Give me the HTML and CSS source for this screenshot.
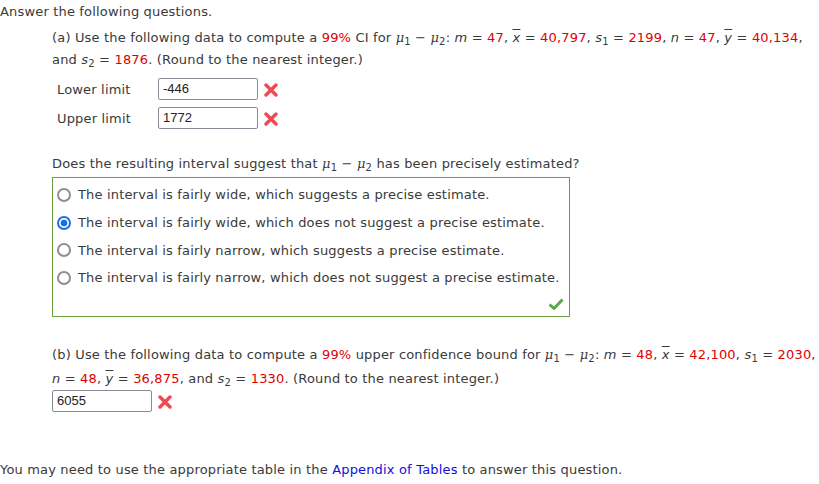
FILE: index.html
```html
<!DOCTYPE html>
<html>
<head>
<meta charset="utf-8">
<link rel="stylesheet" href="styles.css">
</head>
<body>
<p class="intro">Answer the following questions.</p>
<div class="part">
  <p class="q">(a) Use the following data to compute a <span class="r">99%</span> CI for <i class="mu">μ</i><sub>1</sub> − <i class="mu">μ</i><sub>2</sub>: <i>m</i> = <span class="r">47</span>, <i class="bar">x</i> = <span class="r">40,797</span>, <i>s</i><sub>1</sub> = <span class="r">2199</span>, <i>n</i> = <span class="r">47</span>, <i class="bar">y</i> = <span class="r">40,134</span>,<br>and <i>s</i><sub>2</sub> = <span class="r">1876</span>. (Round to the nearest integer.)</p>
  <div class="rows">
    <div class="row"><span class="lbl">Lower limit</span><span class="inp">-446</span><svg class="x" viewBox="0 0 14 14"><path d="M2 2 L12 12 M12 2 L2 12" stroke="#f0494f" stroke-width="3.4" stroke-linecap="round"/></svg></div>
    <div class="row"><span class="lbl">Upper limit</span><span class="inp">1772</span><svg class="x" viewBox="0 0 14 14"><path d="M2 2 L12 12 M12 2 L2 12" stroke="#f0494f" stroke-width="3.4" stroke-linecap="round"/></svg></div>
  </div>
  <p class="q2">Does the resulting interval suggest that <i class="mu">μ</i><sub>1</sub> − <i class="mu">μ</i><sub>2</sub> has been precisely estimated?</p>
  <div class="box">
    <div class="opt"><span class="radio"></span>The interval is fairly wide, which suggests a precise estimate.</div>
    <div class="opt"><span class="radio on"></span>The interval is fairly wide, which does not suggest a precise estimate.</div>
    <div class="opt"><span class="radio"></span>The interval is fairly narrow, which suggests a precise estimate.</div>
    <div class="opt"><span class="radio"></span>The interval is fairly narrow, which does not suggest a precise estimate.</div>
    <svg class="check" viewBox="0 0 16 12"><path d="M1.5 6.5 L6 10.5 L14.5 1.5" fill="none" stroke="#5aa84a" stroke-width="3" stroke-linejoin="round"/></svg>
  </div>
  <p class="q q3">(b) Use the following data to compute a <span class="r">99%</span> upper confidence bound for <i class="mu">μ</i><sub>1</sub> − <i class="mu">μ</i><sub>2</sub>: <i>m</i> = <span class="r">48</span>, <i class="bar">x</i> = <span class="r">42,100</span>, <i>s</i><sub>1</sub> = <span class="r">2030</span>,<br><i>n</i> = <span class="r">48</span>, <i class="bar">y</i> = <span class="r">36,875</span>, and <i>s</i><sub>2</sub> = <span class="r">1330</span>. (Round to the nearest integer.)</p>
  <div class="row rowb"><span class="inp">6055</span><svg class="x" viewBox="0 0 14 14"><path d="M2 2 L12 12 M12 2 L2 12" stroke="#f0494f" stroke-width="3.4" stroke-linecap="round"/></svg></div>
</div>
<p class="foot">You may need to use the appropriate table in the <a href="#">Appendix of Tables</a> to answer this question.</p>
</body>
</html>
```
FILE: styles.css
```css
body {
  margin: 0;
  font-family: "DejaVu Sans", Verdana, sans-serif;
  font-size: 13px;
  letter-spacing: 0.17px;
  color: #3a3a3a;
  background: #fff;
}
p { margin: 0; }
.intro { padding: 3px 0 0 0; line-height: 18px; }
.part { padding-left: 52px; }
.q { margin-top: 6px; line-height: 22px; white-space: nowrap; }
.r { color: #e00000; }
i { font-style: italic; }
i.mu { font-family: "DejaVu Serif", serif; }
sub { font-size: 10px; vertical-align: -3px; line-height: 0; }
.bar { text-decoration: overline; }
.rows { margin-top: 7px; padding-left: 5px; display: flex; flex-direction: column; gap: 7px; }
.row { display: flex; align-items: center; height: 22px; }
.lbl { width: 101px; }
.inp {
  box-sizing: border-box;
  width: 100px; height: 22px;
  border: 1px solid #8a8a95;
  border-radius: 2px;
  font-family: "Liberation Sans", Arial, sans-serif;
  font-size: 13px;
  letter-spacing: 0;
  color: #222;
  padding: 2px 4px;
  line-height: 16px;
}
.x { width: 14px; height: 14px; margin-left: 6px; margin-top: 2px; }
.q2 { margin-top: 26px; line-height: 18px; }
.box {
  position: relative;
  margin-top: 4px;
  width: 518px;
  height: 140px;
  box-sizing: border-box;
  border: 1px solid #6b9e3d;
  padding-top: 3px;
}
.opt { display: flex; align-items: center; height: 27.7px; padding-left: 4px; white-space: nowrap; }
.radio {
  box-sizing: border-box;
  width: 14px; height: 14px;
  border: 2px solid #8e8e96;
  border-radius: 50%;
  margin-right: 7px;
  flex: none;
}
.radio.on { border-color: #1a6ee6; background: radial-gradient(circle, #1a6ee6 0 3.2px, #fff 3.7px); }
.check { position: absolute; right: 5px; bottom: 6px; width: 16px; height: 12px; }
.q3 { margin-top: 26px; line-height: 24px; }
.rowb { margin-top: -1px; }
.foot { margin-top: 49px; line-height: 18px; }
a { color: #1010d8; text-decoration: none; }
```
